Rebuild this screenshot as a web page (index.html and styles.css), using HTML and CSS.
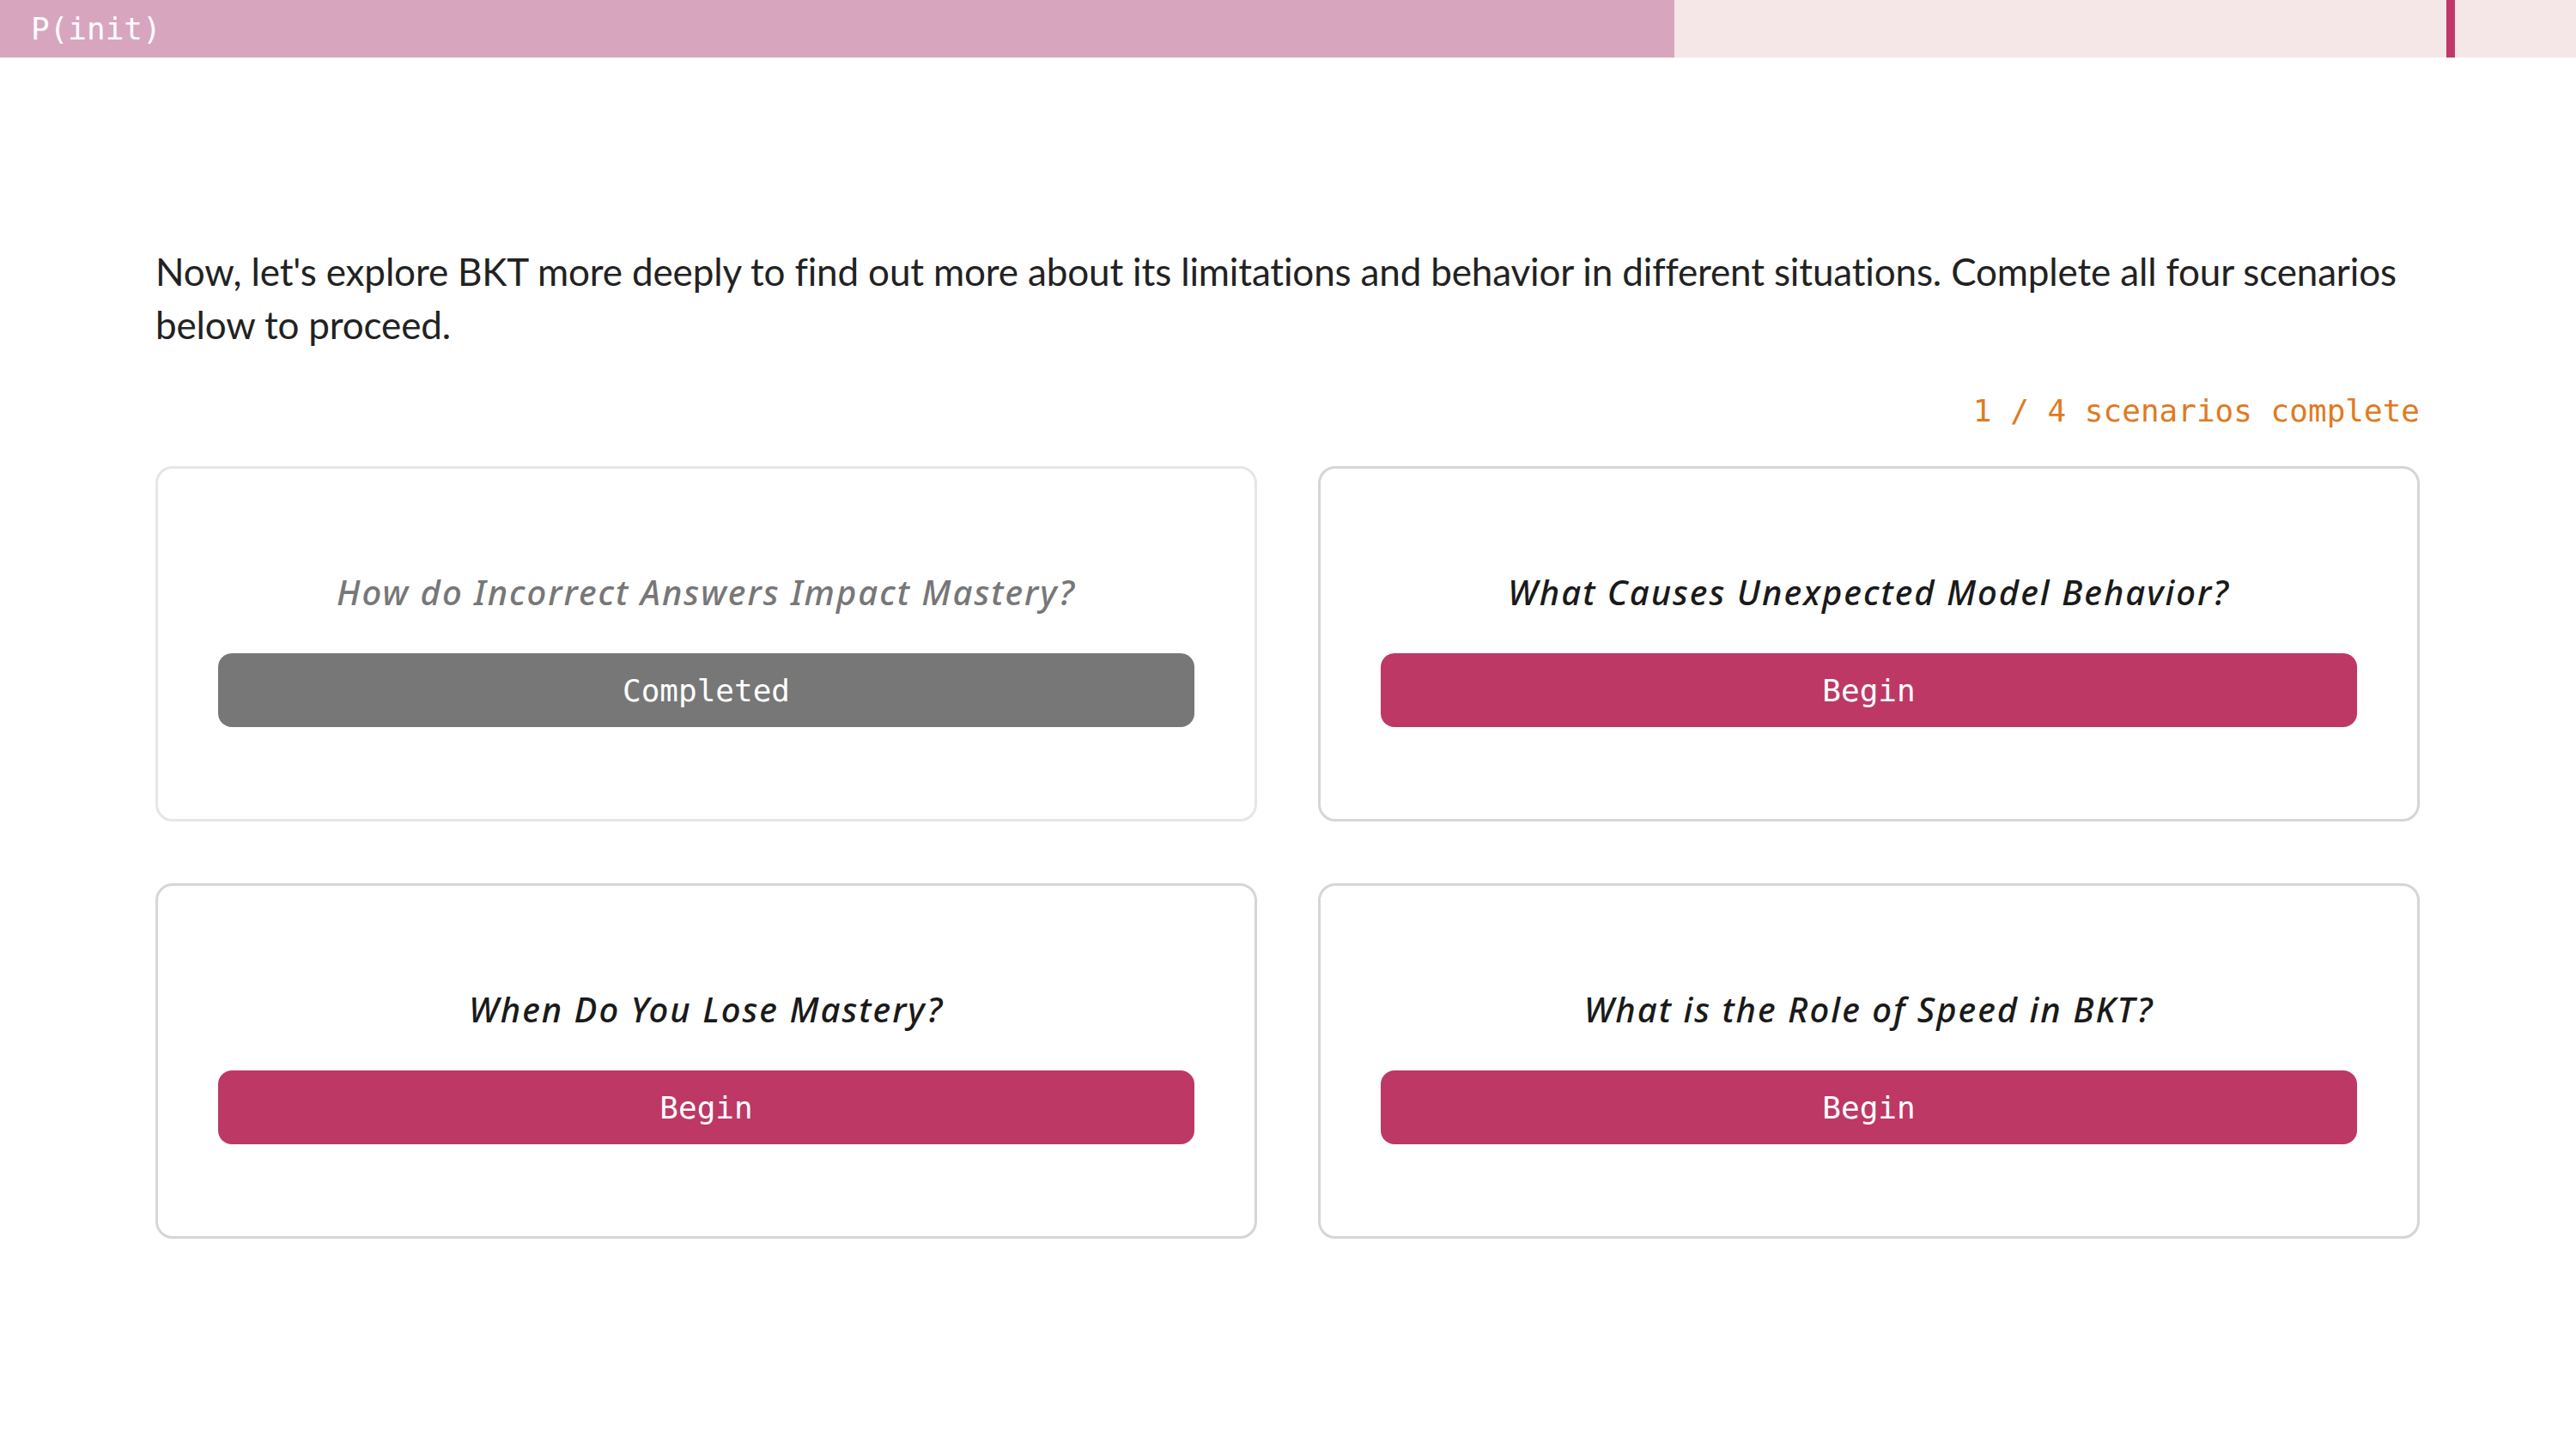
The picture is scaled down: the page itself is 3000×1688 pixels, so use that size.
FILE: index.html
```html
<!DOCTYPE html>
<html lang="en">
<head>
<meta charset="utf-8">
<title>BKT Scenarios</title>
<link rel="stylesheet" href="styles.css">
</head>
<body>
  <header class="topbar">
    <div class="topbar-fill" style="width: 65%;">
      <span class="topbar-label">P(init)</span>
    </div>
    <div class="topbar-marker" style="left: 95%;"></div>
  </header>

  <main class="content">
    <p class="intro">Now, let's explore BKT more deeply to find out more about its limitations and behavior in different situations. Complete all four scenarios below to proceed.</p>

    <div class="progress">1 / 4 scenarios complete</div>

    <section class="grid">
      <div class="card card-done">
        <h2 class="card-title">How do Incorrect Answers Impact Mastery?</h2>
        <button class="btn btn-done">Completed</button>
      </div>
      <div class="card">
        <h2 class="card-title">What Causes Unexpected Model Behavior?</h2>
        <button class="btn">Begin</button>
      </div>
      <div class="card">
        <h2 class="card-title">When Do You Lose Mastery?</h2>
        <button class="btn">Begin</button>
      </div>
      <div class="card">
        <h2 class="card-title">What is the Role of Speed in BKT?</h2>
        <button class="btn">Begin</button>
      </div>
    </section>
  </main>
</body>
</html>
```

FILE: styles.css
```css
html, body {
  margin: 0;
  padding: 0;
  background: #ffffff;
}

body {
  font-family: "Lato", "Noto Sans", sans-serif;
  color: #222222;
}

.topbar {
  position: relative;
  height: 67px;
  background: #f5e7e8;
  display: flex;
}

.topbar-fill {
  height: 100%;
  background: #d8a5bf;
  display: flex;
  align-items: center;
}

.topbar-label {
  padding-left: 36px;
  font-family: "DejaVu Sans Mono", "Liberation Mono", monospace;
  font-size: 36px;
  color: #ffffff;
}

.topbar-marker {
  position: absolute;
  top: 0;
  width: 10px;
  height: 100%;
  margin-left: -1px;
  background: #c0386a;
}

.content {
  padding: 0 182px 0 181px;
}

.intro {
  margin: 0;
  padding-top: 218px;
  font-size: 44px;
  line-height: 62px;
  letter-spacing: -0.15px;
  color: #222222;
}

.progress {
  margin-top: 45px;
  text-align: right;
  font-family: "DejaVu Sans Mono", "Liberation Mono", monospace;
  font-size: 36px;
  line-height: 50px;
  color: #e07a22;
}

.grid {
  margin-top: 39px;
  display: grid;
  grid-template-columns: 1fr 1fr;
  column-gap: 71px;
  row-gap: 72px;
}

.card {
  box-sizing: border-box;
  height: 414px;
  border: 3px solid #d6d6d6;
  border-radius: 20px;
  padding: 119px 70px 0 70px;
  display: flex;
  flex-direction: column;
  align-items: stretch;
}

.card-done {
  border-color: #e6e6e6;
}

.card-title {
  margin: 0;
  height: 50px;
  line-height: 50px;
  text-align: center;
  font-family: "Noto Sans", "Open Sans", sans-serif;
  font-style: italic;
  font-weight: 500;
  font-size: 40px;
  letter-spacing: 2px;
  color: #1a1a1a;
}

.card-done .card-title {
  color: #777777;
}

.btn {
  margin-top: 46px;
  height: 86px;
  border: none;
  border-radius: 16px;
  background: #bd3864;
  color: #ffffff;
  font-family: "DejaVu Sans Mono", "Liberation Mono", monospace;
  font-size: 36px;
  cursor: pointer;
}

.btn-done {
  background: #777777;
}
```
